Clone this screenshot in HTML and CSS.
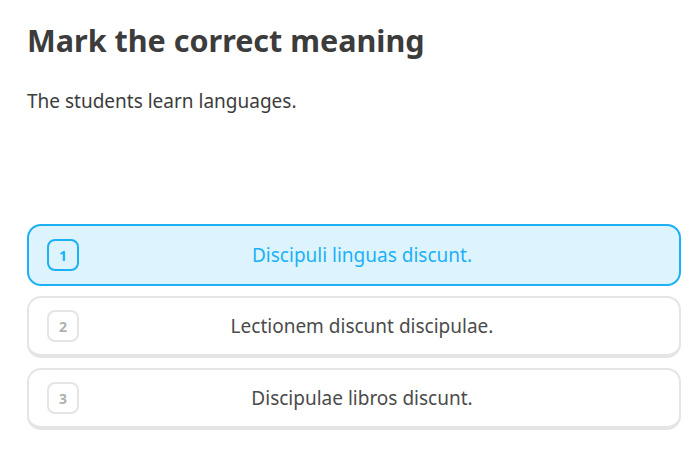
FILE: index.html
```html
<!DOCTYPE html>
<html>
<head>
<meta charset="utf-8">
<link rel="stylesheet" href="styles.css">
</head>
<body>
<main class="page">
  <h1 class="title">Mark the correct meaning</h1>
  <p class="prompt">The students learn languages.</p>
  <div class="choices">
    <div class="choice selected">
      <span class="num">1</span>
      <span class="label">Discipuli linguas discunt.</span>
    </div>
    <div class="choice">
      <span class="num">2</span>
      <span class="label">Lectionem discunt discipulae.</span>
    </div>
    <div class="choice">
      <span class="num">3</span>
      <span class="label">Discipulae libros discunt.</span>
    </div>
  </div>
</main>
</body>
</html>
```
FILE: styles.css
```css
* { box-sizing: border-box; }
html, body { margin: 0; padding: 0; background: #fff; }
body { font-family: "Noto Sans", "DejaVu Sans", sans-serif; color: #4b4b4b; }
.page { padding: 20px 16px 0 27px; }
.title {
  margin: 0;
  font-size: 30.5px;
  font-weight: 700;
  color: #3c3c3c;
  line-height: 40px;
}
.prompt {
  margin: 28px 0 0 0;
  font-size: 19px;
  line-height: 26px;
  color: #3c3c3c;
}
.choices {
  margin-top: 110px;
  display: flex;
  flex-direction: column;
  gap: 10px;
  width: 654px;
}
.choice {
  display: flex;
  align-items: center;
  height: 62px;
  padding: 0 18px;
  border: 2px solid #e5e5e5;
  border-bottom-width: 4px;
  border-radius: 14px;
  background: #fff;
}
.choice.selected {
  border: 2px solid #1cb0f6;
  background: #ddf4ff;
}
.num {
  width: 32px;
  height: 32px;
  flex: none;
  display: flex;
  align-items: center;
  justify-content: center;
  border: 2px solid #e5e5e5;
  border-radius: 8px;
  font-size: 14px;
  font-weight: 700;
  color: #afafaf;
}
.selected .num { border-color: #1cb0f6; color: #1cb0f6; }
.label {
  flex: 1;
  text-align: center;
  font-size: 19px;
  padding-right: 16px;
}
.selected .label { color: #1cb0f6; }
```
